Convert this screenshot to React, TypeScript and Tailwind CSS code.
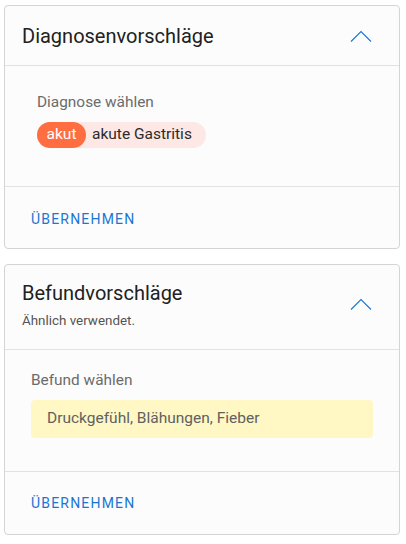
import React from "react";

function Chevron() {
  return (
    <svg width="22" height="12" viewBox="0 0 22 12" className="shrink-0">
      <path d="M1 11.5 L11 1.5 L21 11.5" fill="none" stroke="#1976d2" strokeWidth="1.1" />
    </svg>
  );
}

function Action() {
  return (
    <button className="block text-[14px] leading-[20px] font-normal tracking-[0.085em] text-[#1976d2]">
      ÜBERNEHMEN
    </button>
  );
}

export default function App() {
  return (
    <div
      className="min-h-screen bg-white pt-[5px] pl-[4px]"
      style={{ fontFamily: "Roboto, 'Noto Sans', sans-serif" }}
    >
      {/* Diagnosen */}
      <div className="w-[396px] rounded-[4px] border border-[#d4d4d4] bg-[#fcfcfc]">
        <div className="flex h-[60px] items-center justify-between border-b border-[#e2e2e2] pl-[17px] pr-[27px]">
          <h2 className="text-[20px] leading-[28px] text-[#212121]">Diagnosenvorschläge</h2>
          <Chevron />
        </div>
        <div className="px-[32px] pt-[26px] pb-[38px]">
          <div className="text-[15.4px] leading-[20px] text-[#6b6b6b]">Diagnose wählen</div>
          <div className="mt-[10px] flex h-[26px] w-fit items-center rounded-full bg-[#fde8e5] pr-[14px]">
            <span className="flex h-[26px] w-[49px] items-center justify-center rounded-full bg-[#ff6e40] text-[15.5px] text-white">
              akut
            </span>
            <span className="ml-[6px] text-[15.5px] text-[#2b2b2b]">akute Gastritis</span>
          </div>
        </div>
        <div className="border-t border-[#e2e2e2] pl-[26px] pt-[22px] pb-[19px]">
          <Action />
        </div>
      </div>

      {/* Befunde */}
      <div className="mt-[15px] w-[396px] rounded-[4px] border border-[#d4d4d4] bg-[#fcfcfc]">
        <div className="flex items-center justify-between border-b border-[#e2e2e2] pl-[17px] pr-[27px] pt-[14px] pb-[20px]">
          <div>
            <h2 className="text-[20px] leading-[28px] text-[#212121]">Befundvorschläge</h2>
            <div className="mt-[6px] text-[13.4px] leading-[16px] text-[#555]">Ähnlich verwendet.</div>
          </div>
          <Chevron />
        </div>
        <div className="px-[26px] pt-[20px] pb-[33px]">
          <div className="text-[15.4px] leading-[20px] text-[#6b6b6b]">Befund wählen</div>
          <div className="mt-[10px] flex h-[38px] items-center rounded-[4px] bg-[#fff8c4] px-[16px] text-[15.5px] text-[#616161]">
            Druckgefühl, Blähungen, Fieber
          </div>
        </div>
        <div className="border-t border-[#e2e2e2] pl-[26px] pt-[21px] pb-[21px]">
          <Action />
        </div>
      </div>
    </div>
  );
}
